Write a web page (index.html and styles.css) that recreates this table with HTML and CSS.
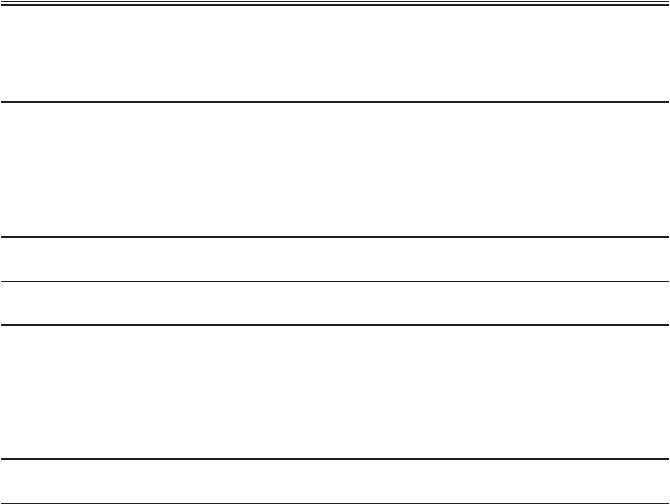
FILE: index.html
```html
<!DOCTYPE html>
<html>
<head>
<meta charset="utf-8">
<link rel="stylesheet" href="styles.css">
</head>
<body>
<div class="table">
  <div class="rule-top"></div>
  <div class="row r1"></div>
  <div class="row r2"></div>
  <div class="row r3"></div>
  <div class="row r4"></div>
  <div class="row r5"></div>
  <div class="row r6"></div>
</div>
</body>
</html>
```
FILE: styles.css
```css
html, body {
  margin: 0;
  padding: 0;
  background: #fff;
  font-family: "Liberation Sans", Arial, sans-serif;
}
.table {
  display: flex;
  flex-direction: column;
  margin: 0 1px;
  width: 668px;
}
.rule-top {
  margin-top: 1px;
  height: 2px;
  border-top: 1px solid #231f20;
  border-bottom: 2px solid #231f20;
}
.row {
  border-bottom: 2px solid #231f20;
}
.r1 { height: 95px; }
.r2 { height: 133px; }
.r3 { height: 43px; border-bottom-width: 1px; }
.r4 { height: 42px; }
.r5 { height: 132px; }
.r6 { height: 43px; border-bottom-width: 1px; }
```
